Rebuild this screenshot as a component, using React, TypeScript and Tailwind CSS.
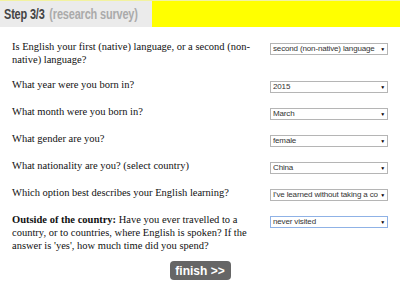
const questions: { text: React.ReactNode; value: string; focus?: boolean }[] = [
  { text: "Is English your first (native) language, or a second (non-native) language?", value: "second (non-native) language" },
  { text: "What year were you born in?", value: "2015" },
  { text: "What month were you born in?", value: "March" },
  { text: "What gender are you?", value: "female" },
  { text: "What nationality are you? (select country)", value: "China" },
  { text: "Which option best describes your English learning?", value: "I've learned without taking a course" },
  {
    text: (
      <>
        <b>Outside of the country:</b> Have you ever travelled to a country, or to countries, where English is spoken? If the answer is 'yes', how much time did you spend?
      </>
    ),
    value: "never visited",
    focus: true,
  },
];

function FakeSelect({ value, focus }: { value: string; focus?: boolean }) {
  return (
    <div
      className={`flex items-center h-[12px] w-[118px] bg-white border ${focus ? "border-[#8fb2e6]" : "border-[#b5b5b5]"} pl-[2px] pr-[2px] text-[8px] leading-none text-[#333] overflow-hidden tracking-[-0.15px]`}
      style={{ fontFamily: '"Liberation Sans", Arial, sans-serif' }}
    >
      <span className="flex-1 min-w-0 whitespace-nowrap overflow-hidden">{value}</span>
      <span className="text-[5px] ml-[2px] text-black">▼</span>
    </div>
  );
}

export default function App() {
  return (
    <div className="w-[400px] h-[296px] bg-white overflow-hidden">
      <div className="flex h-[27px] bg-[#ffff00] border-t border-[#f2f2a0]">
        <div className="w-[152px] bg-[#ebebeb] flex items-center pl-[4px] overflow-hidden">
          <div
            className="whitespace-nowrap text-[14px] font-bold origin-left scale-x-[0.78] tracking-[-0.2px]"
            style={{ fontFamily: '"Liberation Sans", Arial, sans-serif' }}
          >
            <span className="text-[#444]">Step 3/3</span>
            <span className="text-[#aaa] ml-[6px]">(research survey)</span>
          </div>
        </div>
      </div>
      <div className="pl-[12px] pr-[12px] pt-[13px]" style={{ fontFamily: '"Liberation Serif", Georgia, serif' }}>
        {questions.map((q, i) => (
          <div key={i} className="flex items-start pb-[12px]">
            <div className="w-[249px] text-[10.5px] leading-[13px] text-[#111]">{q.text}</div>
            <div className="ml-[10px] pt-[3px]">
              <FakeSelect value={q.value} focus={q.focus} />
            </div>
          </div>
        ))}
      </div>
      <div className="flex justify-center -mt-[3px]">
        <button
          className="bg-[#666] text-white font-bold text-[12px] rounded-[4px] w-[61px] h-[19px] leading-none"
          style={{ fontFamily: '"Liberation Sans", Arial, sans-serif' }}
        >
          finish &gt;&gt;
        </button>
      </div>
    </div>
  );
}
